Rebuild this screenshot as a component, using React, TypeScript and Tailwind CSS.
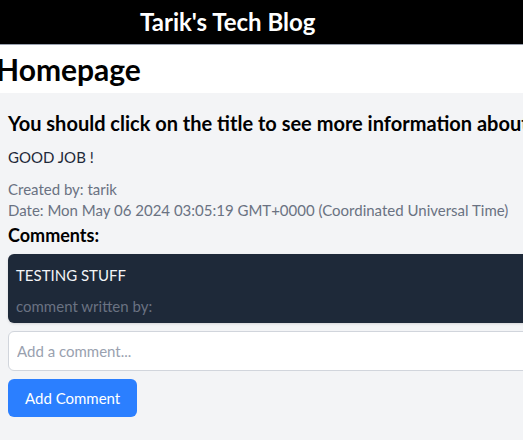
export default function App() {
  const font = { fontFamily: 'Lato, "Noto Sans", sans-serif' };
  return (
    <div className="min-h-[440px] w-[760px] bg-gray-100 font-['Lato','Noto_Sans',sans-serif]">
      <header className="flex h-[45px] items-center border-b border-gray-400 bg-black pl-[140px]">
        <h1 className="text-2xl font-bold text-white">Tarik's Tech Blog</h1>
      </header>
      <div className="bg-white py-1.5">
        <h1 className="ml-[-4px] text-3xl font-bold text-black">Homepage</h1>
      </div>
      <main className="px-2 pt-4">
        <h2 className="whitespace-nowrap text-xl leading-7 font-bold text-black">
          You should click on the title to see more information about this post
        </h2>
        <p className="mt-2 text-[15px] leading-6 text-gray-800">GOOD JOB !</p>
        <p className="mt-[10px] text-[15px] leading-[21px] text-gray-500">Created by: tarik</p>
        <p className="text-[15px] leading-[21px] text-gray-500">
          Date: Mon May 06 2024 03:05:19 GMT+0000 (Coordinated Universal Time)
        </p>
        <h3 className="text-lg leading-7 font-bold text-black">Comments:</h3>
        <div className="mt-[5px] rounded-md bg-gray-800 px-2 pt-[9px] pb-[5px] shadow-sm">
          <p className="text-[15px] leading-6 text-gray-100">TESTING STUFF</p>
          <p className="mt-[7px] text-[15px] leading-6 text-gray-500">comment written by:</p>
        </div>
        <input
          className="mt-2 block h-10 w-full rounded-md border border-gray-300 bg-white px-2 text-[15px] placeholder:text-gray-400"
          placeholder="Add a comment..."
          style={font}
        />
        <button className="mt-2 h-[38px] rounded-md bg-blue-500 px-[17px] text-[15px] text-white" style={font}>
          Add Comment
        </button>
      </main>
    </div>
  );
}
